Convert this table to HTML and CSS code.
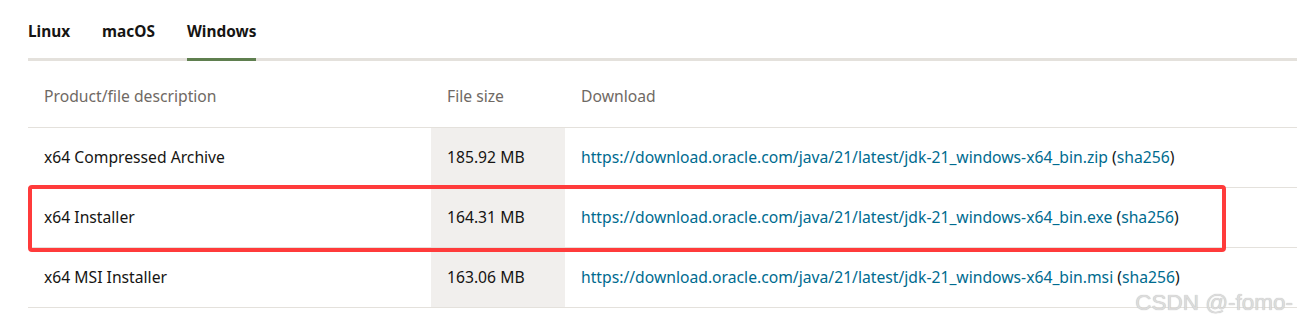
FILE: index.html
```html
<!DOCTYPE html>
<html lang="en">
<head>
<meta charset="utf-8">
<title>JDK 21 Downloads</title>
<link rel="stylesheet" href="styles.css">
</head>
<body>
<div class="page">
  <nav class="tabs">
    <span class="tab">Linux</span>
    <span class="tab">macOS</span>
    <span class="tab active">Windows</span>
  </nav>
  <div class="table-wrap">
    <table class="dl">
      <thead>
        <tr>
          <th class="c-desc">Product/file description</th>
          <th class="c-size">File size</th>
          <th class="c-link">Download</th>
        </tr>
      </thead>
      <tbody>
        <tr>
          <td class="c-desc">x64 Compressed Archive</td>
          <td class="c-size shade">185.92 MB</td>
          <td class="c-link"><a href="#">https://download.oracle.com/java/21/latest/jdk-21_windows-x64_bin.zip</a> (<a href="#">sha256</a>)</td>
        </tr>
        <tr>
          <td class="c-desc">x64 Installer</td>
          <td class="c-size shade">164.31 MB</td>
          <td class="c-link"><a href="#">https://download.oracle.com/java/21/latest/jdk-21_windows-x64_bin.exe</a> (<a href="#">sha256</a>)</td>
        </tr>
        <tr>
          <td class="c-desc">x64 MSI Installer</td>
          <td class="c-size shade">163.06 MB</td>
          <td class="c-link"><a href="#">https://download.oracle.com/java/21/latest/jdk-21_windows-x64_bin.msi</a> (<a href="#">sha256</a>)</td>
        </tr>
      </tbody>
    </table>
    <div class="highlight"></div>
  </div>
  <div class="watermark">CSDN @-fomo-</div>
</div>
</body>
</html>
```
FILE: styles.css
```css
* { box-sizing: border-box; }
html, body {
  margin: 0;
  padding: 0;
  background: #ffffff;
}
body {
  font-family: "Noto Sans", "Open Sans", "Liberation Sans", sans-serif;
  font-size: 15.7px;
  color: #161513;
}
.page {
  position: relative;
  width: 1297px;
  height: 327px;
  padding-left: 28px;
  overflow: hidden;
}
.tabs {
  display: flex;
  gap: 32px;
  height: 61px;
  border-bottom: 3px solid #e4e1dc;
}
.tab {
  display: flex;
  align-items: flex-start;
  padding-top: 21px;
  font-weight: 700;
  font-size: 15.4px;
  color: #161513;
  margin-bottom: -3px;
  border-bottom: 3px solid transparent;
}
.tab.active {
  border-bottom-color: #5f7f4f;
}
.table-wrap {
  position: relative;
}
.dl {
  width: 100%;
  border-collapse: collapse;
}
.dl th, .dl td {
  text-align: left;
  padding: 0 16px;
  border-bottom: 1px solid #e4e1dc;
  vertical-align: middle;
}
.dl th {
  height: 66px;
  padding-top: 5px;
  font-weight: 400;
  color: #6f6964;
}
.dl td {
  height: 60px;
}
.c-desc { width: 403px; }
.c-size { width: 134px; }
.shade { background: #f1efed; }
.dl a {
  color: #006b8f;
  text-decoration: none;
}
.highlight {
  position: absolute;
  left: 0;
  top: 124px;
  width: 1198px;
  height: 67px;
  border: 4px solid #ff3b3b;
  border-radius: 4px;
  pointer-events: none;
}
.watermark {
  position: absolute;
  right: 4px;
  top: 290px;
  font-family: "Liberation Sans", Arial, sans-serif;
  font-size: 22.5px;
  color: #dcdcdc;
  text-shadow: 0 0 1px #b0b0b0;
}
```
